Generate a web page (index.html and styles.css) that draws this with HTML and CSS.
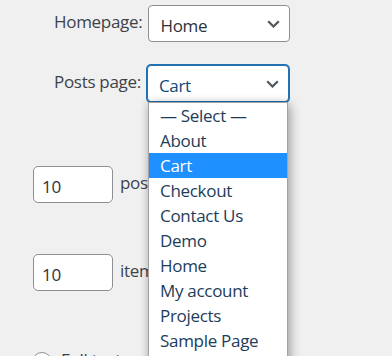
FILE: index.html
```html
<!DOCTYPE html>
<html lang="en">
<head>
<meta charset="utf-8">
<title>Reading settings</title>
<link rel="stylesheet" href="styles.css">
</head>
<body>
<div class="page">
  <ul class="front-pages">
    <li class="pick-row">
      <label class="pick-label">Homepage:</label>
      <div class="select">
        <span class="select-value">Home</span>
        <svg class="chevron" width="13" height="8" viewBox="0 0 13 8"><path d="M1.2 1.2 L6.5 6.5 L11.8 1.2" fill="none" stroke="#50575e" stroke-width="2.2"/></svg>
      </div>
    </li>
    <li class="pick-row">
      <label class="pick-label">Posts page:</label>
      <div class="select select-focus">
        <span class="select-value">Cart</span>
        <svg class="chevron" width="13" height="8" viewBox="0 0 13 8"><path d="M1.2 1.2 L6.5 6.5 L11.8 1.2" fill="none" stroke="#50575e" stroke-width="2.2"/></svg>
      </div>
    </li>
  </ul>

  <div class="field field-posts">
    <div class="num-input"><span class="num-value">10</span></div>
    <span class="field-label">posts per page</span>
  </div>

  <div class="field field-items">
    <div class="num-input"><span class="num-value">10</span></div>
    <span class="field-label">items</span>
  </div>

  <div class="radio-row">
    <span class="radio"></span>
    <span class="radio-label">Full text</span>
  </div>

  <ul class="dropdown">
    <li class="option">— Select —</li>
    <li class="option">About</li>
    <li class="option option-active">Cart</li>
    <li class="option">Checkout</li>
    <li class="option">Contact Us</li>
    <li class="option">Demo</li>
    <li class="option">Home</li>
    <li class="option">My account</li>
    <li class="option">Projects</li>
    <li class="option">Sample Page</li>
  </ul>
</div>
</body>
</html>
```

FILE: styles.css
```css
html, body {
  margin: 0;
  padding: 0;
}

body {
  background: #f0f0f1;
  font-family: "Open Sans", "Noto Sans", sans-serif;
  font-size: 17px;
  letter-spacing: -0.3px;
  color: #3c434a;
  width: 392px;
  height: 356px;
  overflow: hidden;
}

.page {
  position: relative;
  height: 356px;
  padding-top: 5px;
  box-sizing: border-box;
}

.front-pages {
  list-style: none;
  margin: 0;
  padding: 0 0 0 54px;
  display: flex;
  flex-direction: column;
  gap: 23px;
}

.pick-row {
  display: flex;
  align-items: center;
  gap: 6px;
}

.pick-label {
  padding-bottom: 4px;
}

.select {
  box-sizing: border-box;
  width: 142px;
  height: 37px;
  border: 1px solid #8c8f94;
  border-radius: 4px;
  background: #fff;
  color: #2c3338;
  display: flex;
  align-items: center;
  justify-content: space-between;
  padding: 0 9px 0 11px;
}

.select-focus {
  border-color: #2271b1;
  box-shadow: 0 0 0 1px #2271b1;
  color: #0a4b78;
}

.select-value {
  padding-top: 3px;
}

.chevron {
  display: block;
  margin-top: 1px;
}

.field {
  display: flex;
  align-items: center;
  gap: 7px;
  padding-left: 33px;
}

.field-posts {
  margin-top: 64px;
}

.field-items {
  margin-top: 51px;
}

.num-input {
  box-sizing: border-box;
  width: 80px;
  height: 37px;
  border: 1px solid #8c8f94;
  border-radius: 5px;
  background: #fff;
  color: #2c3338;
  display: flex;
  align-items: center;
  padding-left: 8px;
}

.num-value {
  padding-top: 3px;
}

.field-label {
  padding-bottom: 4px;
}

.radio-row {
  display: flex;
  align-items: center;
  gap: 9px;
  padding-left: 32px;
  margin-top: 57px;
}

.radio {
  box-sizing: border-box;
  width: 20px;
  height: 20px;
  border: 1px solid #8c8f94;
  border-radius: 50%;
  background: #fff;
}

.radio-label {
  padding-bottom: 4px;
}

.dropdown {
  position: absolute;
  left: 148px;
  top: 102px;
  width: 140px;
  height: 300px;
  box-sizing: border-box;
  margin: 0;
  padding: 0;
  list-style: none;
  background: #fff;
  border: 1px solid #a3a3a3;
  box-shadow: 3px 3px 10px rgba(0, 0, 0, 0.28), -1px 0 8px rgba(0, 0, 0, 0.12);
}

.option {
  height: 25px;
  line-height: 25px;
  padding-left: 11px;
  color: #1c3d5a;
  white-space: nowrap;
}

.option-active {
  background: #1e90ff;
  color: #fff;
}
```
